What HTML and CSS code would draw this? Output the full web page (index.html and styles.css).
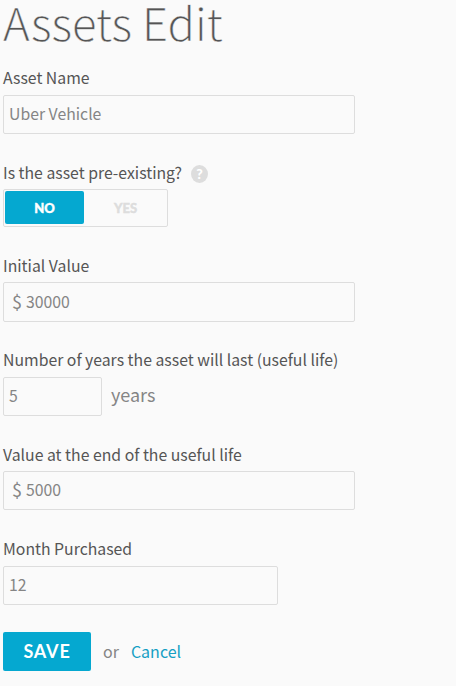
FILE: index.html
```html
<!DOCTYPE html>
<html lang="en">
<head>
<meta charset="utf-8">
<title>Assets Edit</title>
<link rel="stylesheet" href="styles.css">
</head>
<body>
<form class="asset-form">
  <h1 class="title">Assets Edit</h1>
  <section class="field name">
    <div class="label">Asset Name</div>
    <div class="input">Uber Vehicle</div>
  </section>
  <section class="field existing">
    <div class="label">Is the asset pre-existing?<span class="help">?</span></div>
    <div class="toggle"><span class="option selected">NO</span><span class="option">YES</span></div>
  </section>
  <section class="field initial">
    <div class="label">Initial Value</div>
    <div class="input money"><span class="currency">$</span><span>30000</span></div>
  </section>
  <section class="field life">
    <div class="label">Number of years the asset will last (useful life)</div>
    <div class="row"><div class="input short">5</div><span class="unit">years</span></div>
  </section>
  <section class="field final">
    <div class="label">Value at the end of the useful life</div>
    <div class="input money"><span class="currency">$</span><span>5000</span></div>
  </section>
  <section class="field month">
    <div class="label">Month Purchased</div>
    <div class="input medium">12</div>
  </section>
  <div class="actions"><button class="save" type="button">SAVE</button><span class="or">or</span><a class="cancel">Cancel</a></div>
</form>
</body>
</html>
```
FILE: styles.css
```css
* { box-sizing: border-box; }
body {
  margin: 0;
  background: #fafafa;
  color: #555;
  font: 16px/24px "Noto Sans CJK SC", sans-serif;
}
.asset-form { padding-left: 3px; }
.title {
  margin: 0;
  height: 66px;
  font-size: 45.4px;
  font-weight: 200;
  line-height: 42px;
  white-space: nowrap;
  -webkit-text-stroke: 0.4px #fafafa;
}
.field { height: 95px; }
.existing { height: 92px; }
.life { height: 94px; }
.label {
  display: flex;
  align-items: center;
  height: 29px;
  padding-bottom: 5px;
  font-size: 15.8px;
  white-space: nowrap;
}
.existing .label { height: 28px; padding-bottom: 5px; }
.initial .label, .final .label { padding-bottom: 3px; }
.input {
  display: flex;
  align-items: center;
  width: 352px;
  height: 39px;
  padding: 0 5px 1px;
  border: 1px solid #ddd;
  border-radius: 2px;
  color: #858585;
  font-size: 15.8px;
}
.initial .input { height: 40px; padding-bottom: 0; }
.money { padding-left: 8px; gap: 4px; }
.currency { padding-bottom: 3px; font-size: 18px; }
.short { width: 99px; }
.medium { width: 275px; }
.row { display: flex; align-items: center; gap: 9px; }
.unit { padding-bottom: 5px; font-size: 18px; color: #858585; }
.help {
  width: 17px;
  height: 18px;
  margin: 2px 0 0 9px;
  border-radius: 50%;
  background: #ddd;
  color: #fff;
  font: 900 14px/18px Lato, sans-serif;
  text-align: center;
}
.toggle {
  display: flex;
  width: 165px;
  height: 38px;
  padding: 1px;
  border: 1px solid #ddd;
  border-radius: 2px;
}
.option {
  width: 79px;
  height: 33px;
  border-radius: 2px;
  font: 900 13px/34px Lato, sans-serif;
  text-align: center;
  color: #ddd;
  -webkit-text-stroke: 0.4px currentColor;
}
.option + .option { margin-left: 2px; }
.selected { background: #05a8d0; color: #fff; }
.actions { display: flex; align-items: center; height: 39px; }
.save {
  width: 88px;
  height: 39px;
  padding: 0;
  border: 0;
  border-radius: 2px;
  background: #05a8d0;
  color: #fff;
  font: 700 18px/39px Lato, sans-serif;
  letter-spacing: 0.8px;
}
.or { margin-left: 12px; padding-bottom: 2px; color: #858585; }
.cancel { margin-left: 12px; padding-bottom: 2px; color: #159fc4; }
```
